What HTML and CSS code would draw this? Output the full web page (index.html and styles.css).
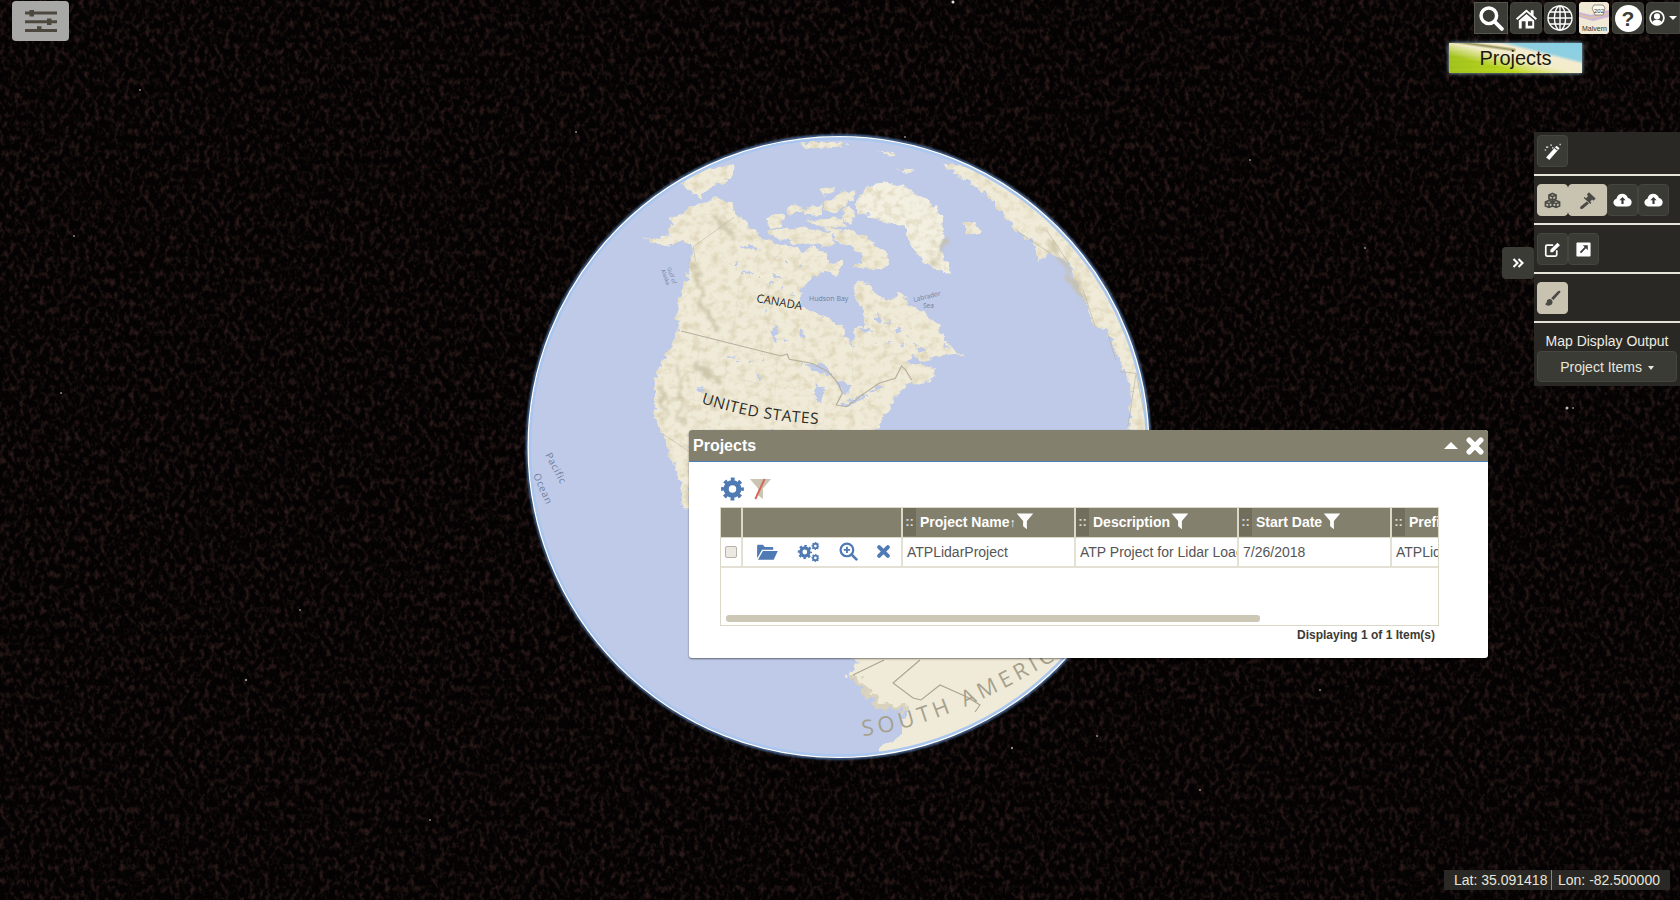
FILE: index.html
```html
<!DOCTYPE html>
<html lang="en">
<head>
  <meta charset="UTF-8" />
  <title>Projects</title>
  <link rel="stylesheet" href="styles.css">
</head>
<body>
  <!-- icons -->
  <svg class="sprite" xmlns="http://www.w3.org/2000/svg">
    <symbol id="i-cog" viewBox="0 0 24 24">
      <circle cx="12" cy="12" r="6.6" fill="none" stroke="currentColor" stroke-width="5.4"/>
      <circle cx="12" cy="12" r="10" fill="none" stroke="currentColor" stroke-width="3.8" stroke-dasharray="3.9 3.95" stroke-dashoffset="2"/>
    </symbol>
    <symbol id="i-cogs" viewBox="0 0 24 24">
      <use href="#i-cog" x="0" y="4" width="16" height="16"/>
      <use href="#i-cog" x="15" y="1" width="9" height="9"/>
      <use href="#i-cog" x="15" y="14" width="9" height="9"/>
    </symbol>
    <symbol id="i-filter" viewBox="0 0 24 24">
      <path d="M1 2h22l-8.5 10v11l-5-4v-7z" fill="currentColor"/>
    </symbol>
    <symbol id="i-search" viewBox="0 0 24 24">
      <circle cx="10" cy="10" r="7.2" fill="none" stroke="currentColor" stroke-width="3.2"/>
      <path d="M15.5 15.5l6.5 6.5" stroke="currentColor" stroke-width="3.6" stroke-linecap="round"/>
    </symbol>
    <symbol id="i-search-plus" viewBox="0 0 24 24">
      <circle cx="10" cy="10" r="8" fill="none" stroke="currentColor" stroke-width="2.8"/>
      <path d="M16 16l6 6" stroke="currentColor" stroke-width="3.4" stroke-linecap="round"/>
      <path d="M10 6v8M6 10h8" stroke="currentColor" stroke-width="2.4"/>
    </symbol>
    <symbol id="i-times" viewBox="0 0 24 24">
      <path d="M5 5l14 14M19 5L5 19" stroke="currentColor" stroke-width="6.4" stroke-linecap="round"/>
    </symbol>
    <symbol id="i-folder" viewBox="0 0 24 20">
      <path d="M1 16V3.5C1 2.6 1.600 2 2.500 2h5l2 2.400h8c.9 0 1.500.6 1.500 1.400V7.500H6.500L1.600 16z" fill="currentColor"/>
      <path d="M7.400 9H24l-4.600 9.500H2z" fill="currentColor"/>
    </symbol>
    <symbol id="i-home" viewBox="0 0 24 24">
      <path d="M12 3L1 12.600l1.400 1.500L12 5.800l9.600 8.300 1.400-1.500-3.600-3.100V4h-3v3z" fill="currentColor"/>
      <path fill-rule="evenodd" d="M12 7.800L4 14.600V23h16v-8.400zM7 15.500h4V23H7zM13.500 15.500H18V20h-4.500z" fill="currentColor"/>
    </symbol>
    <symbol id="i-globe" viewBox="0 0 26 26" fill="none" stroke="currentColor" stroke-width="1.4">
      <circle cx="13" cy="13" r="12"/>
      <ellipse cx="13" cy="13" rx="5.600" ry="12"/>
      <path d="M13 1v24M1 13h24M3 7h20M3 19h20"/>
    </symbol>
    <symbol id="i-user" viewBox="0 0 24 24">
      <circle cx="12" cy="12" r="10.300" fill="none" stroke="currentColor" stroke-width="2.600"/>
      <circle cx="12" cy="9.600" r="4.600" fill="currentColor"/>
      <path d="M5 18.400c1.200-3 3.800-3.900 7-3.900s5.800.9 7 3.900c-1.800 2-4.300 3-7 3s-5.200-1-7-3z" fill="currentColor"/>
    </symbol>
    <symbol id="i-wand" viewBox="0 0 24 24">
      <path d="M17.500 4l4.500 3.500L7.500 24 3 20.500z" fill="currentColor"/>
      <path d="M14.500 7.200l4 3.400 1-1.100-4-3.400z" fill="#3a3b35"/>
      <path d="M3 5h3v1.600H3zM9 2h2v2H9zM11.500 6h1.800v1.800h-1.800zM1 9h2v1.600H1zM22 1h1.500v2H22z" fill="currentColor"/>
    </symbol>
    <symbol id="i-cubes" viewBox="0 0 24 24" fill="none" stroke="currentColor" stroke-width="2.300">
      <path d="M12 2l5 2.200v5.400l-5 2.200-5-2.200V4.200zM12 6.500v5M7.200 4.500L12 6.500l4.800-2" />
      <path d="M7 12l5 2.200v5.400L7 21.800 2 19.600v-5.400zM7 16.500v5M2.200 14.500L7 16.500l4.800-2"/>
      <path d="M17 12l5 2.200v5.400l-5 2.200-5-2.200v-5.400zM17 16.500v5M12.200 14.500l4.800 2 4.800-2"/>
    </symbol>
    <symbol id="i-gavel" viewBox="0 0 24 24">
      <path d="M13 1.500l9.500 8.500-3 3.300-2-1.800-2.800 3.100 1.800 1.700-1.400 1.500L5.700 9.500l1.400-1.500 1.800 1.700 3-3.100-1.900-1.700z" fill="currentColor" transform="translate(1 -1)"/>
      <path d="M11 13.500l3 2.700-8.800 7.300c-1 .8-2.200.8-3 0-.9-.9-.8-2.100.1-3z" fill="currentColor"/>
    </symbol>
    <symbol id="i-cloud" viewBox="0 0 24 18">
      <path d="M6 17.500c-3.200 0-5.700-2.300-5.700-5.200 0-2.400 1.600-4.300 3.900-4.900C4.800 3.500 8 1 11.700 1c3.500 0 6.400 2.200 7.300 5.300 2.800.4 4.800 2.800 4.800 5.500 0 3.200-2.600 5.700-5.900 5.700z" fill="currentColor"/>
      <path d="M12 5l-4 4.300h2.600V14h2.800V9.300H16z" fill="#3a3b35"/>
    </symbol>
    <symbol id="i-edit" viewBox="0 0 24 24">
      <path d="M18 13v6.500c0 1-.8 1.800-1.800 1.800H4.300c-1 0-1.800-.8-1.800-1.800V7.600c0-1 .8-1.800 1.800-1.800H13" fill="none" stroke="currentColor" stroke-width="2.400"/>
      <path d="M9 12.500L19 2.500l3.500 3.500-10 10H9z" fill="currentColor"/>
    </symbol>
    <symbol id="i-external" viewBox="0 0 24 24">
      <path fill-rule="evenodd" d="M3.500 2h17C21.400 2 22 2.600 22 3.500v17c0 .9-.6 1.500-1.500 1.500h-17C2.600 22 2 21.400 2 20.500v-17C2 2.600 2.600 2 3.500 2zM11 6l2.600 2.600-6.800 6.800 1.800 1.800 6.800-6.800L18 13V6z" fill="currentColor"/>
    </symbol>
    <symbol id="i-brush" viewBox="0 0 24 24">
      <path d="M22.800 1.500c-1-.8-2.300-.6-3.200.2L10 11.500c1.400.6 2.400 1.600 3 3l9.500-10.500c.8-.8 1-1.700.3-2.500z" fill="currentColor"/>
      <path d="M8.200 12.800c-2.700 0-4.200 1.800-4.400 4.100-.1 1.500-1 2.400-2.600 2.600 1.500 2.200 4 3 6.300 2.500 3.100-.6 5-2.900 4.500-5.500-.3-2-1.800-3.700-3.800-3.700z" fill="currentColor"/>
    </symbol>
    <symbol id="i-sliders" viewBox="0 0 32 22">
      <path d="M0 1.500h32v3H0zM0 10.200h32v3H0zM0 19h32v3H0z" fill="currentColor"/>
      <path d="M4.500 0h4.500v6.500H4.500zM22 8.500h4.500V15H22zM12 16.200h4.500V22H12z" fill="currentColor"/>
    </symbol>
    <symbol id="i-chevrons" viewBox="0 0 24 24">
      <path d="M3 4l8 8-8 8M13 4l8 8-8 8" fill="none" stroke="currentColor" stroke-width="4.200"/>
    </symbol>
  </svg>

  <!-- map -->
  <div class="map">
    <svg class="stars" viewBox="0 0 1680 900" xmlns="http://www.w3.org/2000/svg">
      <defs>
        <filter id="noise" x="0" y="0" width="100%" height="100%" color-interpolation-filters="sRGB">
          <feTurbulence type="fractalNoise" baseFrequency="0.2 0.14" numOctaves="3" seed="7"/>
          <feColorMatrix values="0 0 0 0 .17  0 0 0 0 .105  0 0 0 0 .1  2.800 0 0 0 -1.300"/>
        </filter>
      </defs>
      <rect width="1680" height="900" filter="url(#noise)"/>
      <g fill="#8e8a80">
        <circle cx="953" cy="2" r="1.500" fill="#ddd"/><circle cx="246" cy="680" r="1.200"/><circle cx="61" cy="393" r="1"/>
        <circle cx="1567" cy="408" r="1.500" fill="#bbb"/><circle cx="1573" cy="408" r="1"/><circle cx="1012" cy="748" r="1.200"/>
        <circle cx="1097" cy="736" r="1"/><circle cx="74" cy="236" r="1"/><circle cx="300" cy="610" r="1"/><circle cx="1200" cy="790" r="1"/>
        <circle cx="1250" cy="160" r="1"/><circle cx="1320" cy="690" r="1"/><circle cx="430" cy="820" r="1"/><circle cx="140" cy="90" r="1"/>
        <circle cx="1365" cy="248" r="1"/><circle cx="576" cy="132" r="1"/><circle cx="905" cy="137" r="1"/>
      </g>
    </svg>

    <svg class="globe" viewBox="520 130 640 640" xmlns="http://www.w3.org/2000/svg">
      <defs>
        <clipPath id="disc"><circle cx="838.500" cy="447" r="310"/></clipPath>
        <filter id="soft" x="-10%" y="-10%" width="120%" height="120%" color-interpolation-filters="sRGB">
          <feTurbulence type="fractalNoise" baseFrequency="0.03" numOctaves="3" seed="9" result="t"/>
          <feDisplacementMap in="SourceGraphic" in2="t" scale="45" xChannelSelector="R" yChannelSelector="G"/>
          <feGaussianBlur stdDeviation="4"/>
        </filter>
        <filter id="wob" x="-5%" y="-5%" width="110%" height="110%" color-interpolation-filters="sRGB">
          <feTurbulence type="fractalNoise" baseFrequency="0.07" numOctaves="3" seed="12" result="t"/>
          <feDisplacementMap in="SourceGraphic" in2="t" scale="24" xChannelSelector="R" yChannelSelector="G"/>
        </filter>
        <filter id="halo" x="-5%" y="-5%" width="110%" height="110%"><feGaussianBlur stdDeviation=".8"/></filter>
        <filter id="mottle" x="-2%" y="-2%" width="104%" height="104%" color-interpolation-filters="sRGB">
          <feTurbulence type="fractalNoise" baseFrequency="0.045" numOctaves="4" seed="4" result="n"/>
          <feDisplacementMap in="SourceGraphic" in2="n" scale="26" xChannelSelector="R" yChannelSelector="G" result="land"/>
          <feColorMatrix in="n" values="0 0 0 0 .85  0 0 0 0 .81  0 0 0 0 .69  2 0 0 0 -.9" result="c"/>
          <feComposite in="c" in2="land" operator="in" result="m"/>
          <feMerge><feMergeNode in="land"/><feMergeNode in="m"/></feMerge>
        </filter>
        <path id="us-curve" d="M701 403Q752 420 817 424"/>
        <path id="sa-curve" d="M863 736Q950 726 1075 648"/>
      </defs>
      <circle cx="838.500" cy="447" r="311.500" fill="none" stroke="#5f8fd0" stroke-width="1.800" filter="url(#halo)"/>
      <circle cx="838.500" cy="447" r="310" fill="#bfcae8"/>

      <g clip-path="url(#disc)">
        <g transform="translate(520 130) scale(.408 .3333)">
          <g filter="url(#mottle)" fill="#f0ebd8">
            <!-- north america -->
            <path d="M295 325L330 330 362 320 372 285 365 265 405 250 430 225 480 205 520 215 528 255 560 280 575 300 600 325 615 335 640 345 665 345 690 365 715 350 745 365 755 390 765 420 745 425 715 445 695 470 685 505 690 530 725 550 770 575 790 590 800 625 815 645 822 620 815 600 845 585 840 540 825 510 818 470 830 450 860 470 880 505 915 510 925 480 960 525 1000 560 1030 590 1030 615 1035 610 1040 640 1090 680 1060 675 1030 680 990 695 960 680 950 700 975 705 1020 715 1010 745 985 770 960 755 945 770 925 800 905 835 885 870 870 905 420 905 420 1135 400 1135 392 1060 372 980 350 910 330 860 328 760 350 690 375 640 390 605 382 550 395 490 410 440 420 380 425 355 400 330 370 345 340 340Z"/>
            <!-- arctic islands -->
            <path d="M600 270L630 248 650 262 640 290 615 300ZM610 305L680 290 720 300 740 340 700 345 650 330 620 320ZM655 228L700 225 690 250 660 250ZM750 215L800 180 825 185 800 230 775 250 750 240ZM700 270L790 265 800 290 740 290ZM800 300L850 320 905 385 900 405 860 420 820 410 845 385 810 350 770 330ZM760 400L790 395 780 440 755 430ZM695 232L745 225 740 255 700 258ZM745 290L790 300 805 335 770 325ZM720 300L760 310 770 345 745 355ZM800 235L825 250 810 285 790 262ZM735 180L770 170 760 195 740 200Z"/>
            <!-- greenland, iceland -->
            <path d="M820 225L850 170 900 155 960 180 1020 230 1040 280 1030 350 1058 428 1030 425 990 395 960 350 940 290 880 270 830 245Z" fill="#f3f0e2"/>
            <path d="M1090 285L1110 272 1130 300 1120 315 1095 310Z"/>
            <!-- top rim -->
            <path d="M395 125L525 105 515 150 465 175 440 205 405 175ZM680 40L790 38 800 48 720 55ZM875 60L930 70 905 74ZM920 115L965 125 945 132Z"/>
            <!-- europe, africa along the limb -->
            <path d="M1035 105L1090 150 1160 210 1215 300 1260 340 1270 395 1300 370 1345 400 1370 480 1410 590 1440 600 1480 720 1500 780 1490 905 1620 905 1620 90Z"/>
          </g>
          <!-- water on the land -->
          <g fill="#bfcae8" filter="url(#wob)">
            <path d="M690 705L740 702 775 745 735 725ZM725 760L745 770 740 815 722 810ZM770 745L810 770 800 795 785 770ZM785 825L845 790 850 798 795 832ZM855 782L885 765 888 772 860 790Z"/>
            <ellipse cx="560" cy="352" rx="20" ry="5"/><ellipse cx="555" cy="428" rx="16" ry="4"/><ellipse cx="625" cy="610" rx="6" ry="26"/>
            <ellipse cx="630" cy="440" rx="10" ry="5"/><ellipse cx="848" cy="600" rx="14" ry="5"/><ellipse cx="880" cy="570" rx="8" ry="7"/>
            <ellipse cx="930" cy="600" rx="7" ry="5"/><ellipse cx="520" cy="680" rx="10" ry="3"/><ellipse cx="585" cy="745" rx="4" ry="12"/>
            <ellipse cx="440" cy="780" rx="5" ry="10"/><ellipse cx="690" cy="610" rx="5" ry="14"/><ellipse cx="980" cy="660" rx="12" ry="6"/>
            <path fill="none" stroke="#bfcae8" stroke-width="6" stroke-dasharray="7 26" d="M530 400L680 500M590 510L660 650M850 530L960 630M870 640L1000 650M620 380L700 420M530 690L600 690"/>
          </g>
          <!-- relief -->
          <g fill="none" stroke="#c6bea3" stroke-width="10" filter="url(#soft)" opacity=".8">
            <path d="M425 400L445 520 480 600"/>
            <path d="M345 760L355 860"/>
            <path d="M380 700L400 880"/>
            <path d="M430 700L490 760"/>
            <path d="M450 770L480 840"/>
            <path d="M1040 330L1020 400"/>
            <path d="M480 250L520 330"/>
            <path d="M1300 330L1390 520"/>
          </g>
          <!-- borders -->
          <g fill="none" stroke="#b5b09c">
            <path stroke-width="3" d="M395 603L640 678 655 672 660 688 715 700 755 725 780 760 790 790 775 825 800 830 850 785 880 760 920 745 935 708 945 720 960 750"/>
            <path stroke-width="1.400" d="M525 262L425 350 430 395M350 912L415 965"/>
            <path stroke="#cdc8b3" stroke-width="1.200" stroke-dasharray="3 4" d="M540 440L520 640M610 470L590 650M720 555L650 670M815 650L815 760M385 720L640 770M360 800L620 840M510 660L490 880M630 680L620 900M760 760L740 900M440 640L420 860"/>
            <path stroke-width="1.600" d="M1215 300L1300 370M1290 300L1345 400M1380 480L1410 590M1470 725L1510 730 1490 890M1510 730L1535 880M1440 610L1460 690"/>
          </g>
        </g>

        <!-- south america -->
        <path d="M852 650L853 677 870 693 887 710 910 712 900 733 880 752 1080 770 1080 650Z" fill="#f0ebd8" filter="url(#wob)"/>
        <path d="M853 677L870 693 887 710 910 712" fill="none" stroke="#d9d3bd" stroke-width="4" filter="url(#wob)"/>
        <path d="M884 660L853 675M920 660L893 683 913 698 921 700 940 685 967 697 980 705 975 712" fill="none" stroke="#a9a48e" stroke-width="1.100"/>
        <text class="label-sa" font-size="22" letter-spacing="4.500"><textPath href="#sa-curve">SOUTH AMERICA</textPath></text>
      </g>
      <circle cx="838.500" cy="447" r="310.300" fill="none" stroke="#fff" stroke-width="1.500"/>
      <circle cx="838.500" cy="447" r="308.500" fill="none" stroke="#a9c6ef" stroke-width="2.400"/>

      <g class="label-big">
        <text x="756" y="302" transform="rotate(10 756 302)" font-size="11.500">CANADA</text>
        <text font-size="15.500" letter-spacing=".6"><textPath href="#us-curve">UNITED STATES</textPath></text>
      </g>
      <g class="label-sea">
        <text x="809" y="301" font-size="7">Hudson Bay</text>
        <text x="914" y="302" font-size="6.500" transform="rotate(-14 914 302)">Labrador</text>
        <text x="923" y="308" font-size="6.500">Sea</text>
        <text x="667" y="268" font-size="5.500" transform="rotate(70 667 268)">Gulf of</text>
        <text x="661" y="270" font-size="5.500" transform="rotate(70 661 270)">Alaska</text>
        <text x="545" y="455" font-size="10" letter-spacing=".6" transform="rotate(62 545 455)">Pacific</text>
        <text x="533" y="475" font-size="10" letter-spacing=".6" transform="rotate(66 533 475)">Ocean</text>
      </g>
    </svg>
  </div>

  <!-- top left menu -->
  <button class="menu-btn" type="button">
    <svg class="ico-sliders"><use href="#i-sliders"/></svg>
  </button>

  <!-- top right tools -->
  <div class="top-tools">
    <button class="tool tool-search" type="button"><svg class="ico-26"><use href="#i-search"/></svg></button>
    <button class="tool" type="button"><svg class="ico-22"><use href="#i-home"/></svg></button>
    <button class="tool" type="button"><svg class="ico-26"><use href="#i-globe"/></svg></button>
    <div class="tool tool-basemap">
      <svg viewBox="0 0 30 32" xmlns="http://www.w3.org/2000/svg">
        <rect width="30" height="32" fill="#f0e9d6"/>
        <path d="M0 10L12 13 30 8V15L14 19 0 15Z" fill="#cdb6d3"/>
        <path d="M0 13L12 16 30 11" stroke="#e7c98b" fill="none"/>
        <path d="M15 3h9l2 3-2 7h-8l-3-7z" fill="#fbf8ee" stroke="#6d6a60" stroke-width=".7"/>
        <text x="15" y="10.500" font-size="6">202</text>
        <text x="3" y="29" font-size="7">Malvern</text>
      </svg>
    </div>
    <button class="tool" type="button"><span class="help-dot">?</span></button>
    <button class="tool tool-user" type="button"><svg class="ico-18"><use href="#i-user"/></svg><span class="caret"></span></button>
  </div>

  <div class="projects-tag">Projects</div>

  <!-- right side tool panel -->
  <button class="collapse-btn" type="button"><svg class="ico-12"><use href="#i-chevrons"/></svg></button>
  <div class="side-panel">
    <div class="side-section side-first">
      <button class="tool" type="button"><svg class="ico-16"><use href="#i-wand"/></svg></button>
    </div>
    <div class="side-section">
      <button class="tool tool-on" type="button"><svg class="ico-16"><use href="#i-cubes"/></svg></button>
      <button class="tool tool-on tool-wide" type="button"><svg class="ico-16"><use href="#i-gavel"/></svg></button>
      <button class="tool" type="button"><svg class="ico-cloud"><use href="#i-cloud"/></svg></button>
      <button class="tool" type="button"><svg class="ico-cloud"><use href="#i-cloud"/></svg></button>
    </div>
    <div class="side-section">
      <button class="tool" type="button"><svg class="ico-16"><use href="#i-edit"/></svg></button>
      <button class="tool" type="button"><svg class="ico-16"><use href="#i-external"/></svg></button>
    </div>
    <div class="side-section">
      <button class="tool tool-on" type="button"><svg class="ico-16"><use href="#i-brush"/></svg></button>
    </div>
    <div class="side-output">
      <div class="output-title">Map Display Output</div>
      <button class="output-btn" type="button">Project Items <span class="caret caret-small"></span></button>
    </div>
  </div>

  <!-- projects window -->
  <div class="win">
    <div class="win-head">
      <span class="win-title">Projects</span>
      <span class="win-up"></span>
      <svg class="win-close"><use href="#i-times"/></svg>
    </div>
    <div class="win-body">
      <div class="grid-tools">
        <svg class="ico-cog"><use href="#i-cog"/></svg>
        <span class="clear-filter">
          <svg><use href="#i-filter"/></svg>
          <span class="clear-slash"></span>
        </span>
      </div>
      <div class="grid-box">
        <table class="grid">
          <colgroup>
            <col class="c-check"><col class="c-actions"><col class="c-name"><col class="c-desc"><col class="c-date"><col class="c-prefix">
          </colgroup>
          <thead>
            <tr>
              <th></th>
              <th></th>
              <th><span class="drag">::</span><span class="th-label">Project Name<span class="sort">↑</span></span><svg class="th-filter"><use href="#i-filter"/></svg></th>
              <th><span class="drag">::</span><span class="th-label">Description</span><svg class="th-filter"><use href="#i-filter"/></svg></th>
              <th><span class="drag">::</span><span class="th-label">Start Date</span><svg class="th-filter"><use href="#i-filter"/></svg></th>
              <th><span class="drag">::</span><span class="th-label">Prefix</span></th>
            </tr>
          </thead>
          <tbody>
            <tr>
              <td class="td-check"><span class="check"></span></td>
              <td>
                <div class="row-actions">
                  <svg class="a-folder"><use href="#i-folder"/></svg>
                  <svg class="a-cogs"><use href="#i-cogs"/></svg>
                  <svg class="a-zoom"><use href="#i-search-plus"/></svg>
                  <svg class="a-del"><use href="#i-times"/></svg>
                </div>
              </td>
              <td>ATPLidarProject</td>
              <td>ATP Project for Lidar Loading</td>
              <td>7/26/2018</td>
              <td>ATPLidar</td>
            </tr>
          </tbody>
        </table>
        <div class="hscroll"></div>
      </div>
      <div class="grid-foot">Displaying 1 of 1 Item(s)</div>
    </div>
  </div>

  <!-- coordinates -->
  <div class="coords">
    <span class="coord coord-lat">Lat: 35.091418</span>
    <span class="coord">Lon: -82.500000</span>
  </div>
</body>
</html>
```

FILE: styles.css
```css
html, body {
  margin: 0;
  padding: 0;
}

body {
  position: relative;
  width: 1680px;
  height: 900px;
  overflow: hidden;
  background: #040202;
  font-family: "Liberation Sans", Arial, sans-serif;
  font-size: 14px;
}

button {
  font-family: inherit;
  padding: 0;
  cursor: pointer;
}

.sprite {
  position: absolute;
  width: 0;
  height: 0;
}

/* map layer */
.map {
  position: absolute;
  left: 0;
  top: 0;
  width: 1680px;
  height: 900px;
}

.stars {
  position: absolute;
  left: 0;
  top: 0;
  width: 1680px;
  height: 900px;
}

.globe {
  position: absolute;
  left: 520px;
  top: 130px;
  width: 640px;
  height: 640px;
}

.label-big text {
  font-family: "Open Sans", sans-serif;
  fill: #2e2c28;
}

.label-sea text {
  font-family: "Open Sans", sans-serif;
  fill: #6f7f9f;
}

.label-sa {
  font-family: "Open Sans", sans-serif;
  fill: #a5a08d;
}

/* buttons */
.tool {
  display: flex;
  align-items: center;
  justify-content: center;
  box-sizing: border-box;
  width: 32px;
  height: 32px;
  border: 1px solid #45463f;
  border-radius: 4px;
  background: #3a3b35;
  color: #fff;
}

.tool-on {
  background: #c8c2b0;
  border-color: #c8c2b0;
  color: #4a4a44;
}

.menu-btn {
  position: absolute;
  left: 12px;
  top: 1px;
  width: 57px;
  height: 40px;
  display: flex;
  align-items: center;
  justify-content: center;
  border: 0;
  border-radius: 4px;
  background: #a8a8a6;
  color: #4c483d;
}

.ico-sliders {
  width: 32px;
  height: 22px;
}

.ico-26 {
  width: 26px;
  height: 26px;
}

.ico-22 {
  width: 23px;
  height: 24px;
}

.ico-18 {
  width: 16px;
  height: 16px;
}

.ico-16 {
  width: 17px;
  height: 17px;
}

.ico-12 {
  width: 12px;
  height: 12px;
}

.ico-cloud {
  width: 19px;
  height: 14px;
}

/* top right */
.top-tools {
  position: absolute;
  left: 1474px;
  top: 2px;
  display: flex;
  gap: 2px;
}

.tool-search {
  width: 34px;
  border-radius: 0;
  border-color: #54554d;
}

.tool-basemap {
  width: 30px;
  margin: 0 1px;
  padding: 0;
  overflow: hidden;
  background: #f0e9d6;
  border: 0;
}

.tool-basemap svg {
  display: block;
  width: 30px;
  height: 32px;
}

.tool-basemap text {
  font-family: "Liberation Sans", sans-serif;
  fill: #333;
}

.help-dot {
  display: block;
  width: 27px;
  height: 27px;
  border-radius: 50%;
  background: #fff;
  color: #3a3b35;
  font-size: 21px;
  font-weight: bold;
  line-height: 27px;
  text-align: center;
}

.tool-user {
  gap: 4px;
  width: 34px;
  border-radius: 4px 0 0 4px;
}

.caret {
  display: inline-block;
  width: 0;
  height: 0;
  border-left: 4px solid transparent;
  border-right: 4px solid transparent;
  border-top: 4px solid #fff;
}

.caret-small {
  border-left-width: 3.5px;
  border-right-width: 3.5px;
  border-top: 4px solid #e8e6dc;
  vertical-align: middle;
  margin-left: 2px;
}

.projects-tag {
  position: absolute;
  left: 1449px;
  top: 43px;
  width: 133px;
  height: 30px;
  line-height: 30px;
  text-align: center;
  font-size: 20px;
  color: #1a1a10;
  background:
    linear-gradient(8deg, rgba(90, 90, 20, 0) 76%, rgba(90, 90, 20, 0.6) 82%, rgba(90, 90, 20, 0) 88%) 0 0 / 50% 100% no-repeat,
    linear-gradient(14deg, rgba(242, 236, 200, 0) 28%, #f2ecc8 50%, #f5ecd0 66%, #8fd0e0 72%, #86cfe6 100%),
    repeating-linear-gradient(0deg, rgba(120, 150, 20, 0.08) 0 2px, rgba(255, 255, 255, 0) 2px 5px),
    linear-gradient(90deg, #a3c41e 0, #bfd91e 50%, #d5df4c 100%);
  box-shadow: 0 0 4px #a9cfe0;
}

/* right panel */
.side-panel {
  position: absolute;
  right: 0;
  top: 132px;
  width: 146px;
  height: 254px;
  display: flex;
  flex-direction: column;
  background: #2a2824;
}

.side-section {
  display: flex;
  padding: 8px 3px 7px 3px;
  border-bottom: 2px solid #e6e3da;
}

.side-section .tool {
  width: 31px;
}

.side-section .tool-wide {
  width: 39px;
}

.side-first {
  padding-top: 3px;
  padding-bottom: 7px;
}

.side-output {
  padding: 10px 3px 0 3px;
  text-align: center;
  color: #eeece2;
}

.output-title {
  font-size: 14px;
  line-height: 17px;
}

.output-btn {
  display: block;
  box-sizing: border-box;
  width: 140px;
  height: 31px;
  margin-top: 1px;
  border: 1px solid #45463f;
  border-radius: 4px;
  background: #3a3b35;
  color: #e8e6dc;
  font-size: 14px;
}

.collapse-btn {
  position: absolute;
  left: 1502px;
  top: 247px;
  width: 32px;
  height: 32px;
  display: flex;
  align-items: center;
  justify-content: center;
  border: 0;
  border-radius: 4px;
  background: #3a3b35;
  color: #fff;
}

/* window */
.win {
  position: absolute;
  left: 689px;
  top: 430px;
  width: 799px;
  height: 228px;
  border-radius: 3px;
  background: #fff;
  box-shadow: 0 1px 2px rgba(0, 0, 0, 0.5);
  overflow: hidden;
}

.win-head {
  display: flex;
  align-items: center;
  box-sizing: border-box;
  height: 32px;
  padding: 0 3px 0 4px;
  background: #83806e;
  border-bottom: 1px solid #4a7fc0;
  color: #fff;
}

.win-title {
  flex: 1;
  font-size: 16px;
  font-weight: bold;
}

.win-up {
  width: 0;
  height: 0;
  margin-right: 7px;
  border-left: 7px solid transparent;
  border-right: 7px solid transparent;
  border-bottom: 7px solid #fff;
}

.win-close {
  width: 20px;
  height: 20px;
  color: #fff;
}

.win-body {
  padding: 14px 49px 0 31px;
}

.grid-tools {
  display: flex;
  align-items: center;
  gap: 5px;
  height: 25px;
  margin-bottom: 6px;
  padding-left: 1px;
}

.ico-cog {
  width: 23px;
  height: 24px;
  color: #4f7ab3;
}

.clear-filter {
  position: relative;
  display: block;
  width: 23px;
  height: 23px;
  color: #cac4b2;
}

.clear-filter svg {
  display: block;
  width: 23px;
  height: 23px;
}

.clear-slash {
  position: absolute;
  left: 10px;
  top: 1px;
  width: 2px;
  height: 22px;
  background: #d9685a;
  transform: rotate(25deg);
}

.grid-box {
  position: relative;
  box-sizing: border-box;
  width: 719px;
  height: 119px;
  border: 1px solid #dcd8c8;
  overflow: hidden;
}

.grid {
  table-layout: fixed;
  width: 809px;
  border-collapse: collapse;
  color: #555;
}

.c-check { width: 21px; }
.c-actions { width: 160px; }
.c-name { width: 173px; }
.c-desc { width: 163px; }
.c-date { width: 153px; }
.c-prefix { width: 139px; }

.grid th {
  height: 29px;
  padding: 0;
  background: #83806e;
  border-right: 2px solid #dcd8c8;
  border-bottom: 1px solid #dcd8c8;
  color: #fff;
  font-size: 14px;
  font-weight: bold;
  text-align: left;
  white-space: nowrap;
  overflow: hidden;
  box-sizing: border-box;
}

.grid th > * {
  vertical-align: middle;
}

.drag {
  display: inline-block;
  width: 13px;
  height: 28px;
  margin-right: 4px;
  background: #716e5d;
  line-height: 28px;
  text-align: center;
  font-size: 13px;
  color: #dedbce;
}

.sort {
  font-size: 12px;
  font-weight: normal;
}

.th-filter {
  width: 18px;
  height: 18px;
  margin-left: 1px;
  margin-top: -3px;
  color: #fff;
}

.grid td {
  height: 30px;
  padding: 0 0 0 4px;
  border-right: 2px solid #e4e1d4;
  border-bottom: 2px solid #e4e1d4;
  box-sizing: border-box;
  font-size: 14px;
  white-space: nowrap;
  overflow: hidden;
}

.grid .td-check {
  padding-left: 4px;
}

.check {
  display: block;
  box-sizing: border-box;
  width: 12px;
  height: 12px;
  border: 1px solid #b5b2a6;
  border-radius: 2px;
  background: #ebe9e2;
}

.row-actions {
  display: flex;
  align-items: center;
  gap: 19px;
  padding-left: 9px;
  color: #4f7ab3;
}

.a-folder { width: 22px; height: 18px; }
.a-cogs { width: 23px; height: 22px; }
.a-zoom { width: 19px; height: 19px; }
.a-del { width: 15px; height: 15px; margin-left: -1px; }

.hscroll {
  position: absolute;
  left: 5px;
  bottom: 3px;
  width: 534px;
  height: 7px;
  border-radius: 3px;
  background: #cdc8b5;
}

.grid-foot {
  width: 715px;
  margin-top: 2px;
  text-align: right;
  font-size: 12px;
  font-weight: bold;
  line-height: 15px;
  color: #3b3a34;
}

/* coordinates */
.coords {
  position: absolute;
  left: 1444px;
  top: 870px;
  width: 226px;
  height: 20px;
  display: flex;
  background: #2a2824;
  color: #e6e4da;
  font-size: 14px;
  line-height: 20px;
}

.coord {
  padding-left: 6px;
}

.coord-lat {
  box-sizing: border-box;
  width: 108px;
  padding-left: 10px;
  border-right: 1px solid #8a8674;
}
```
